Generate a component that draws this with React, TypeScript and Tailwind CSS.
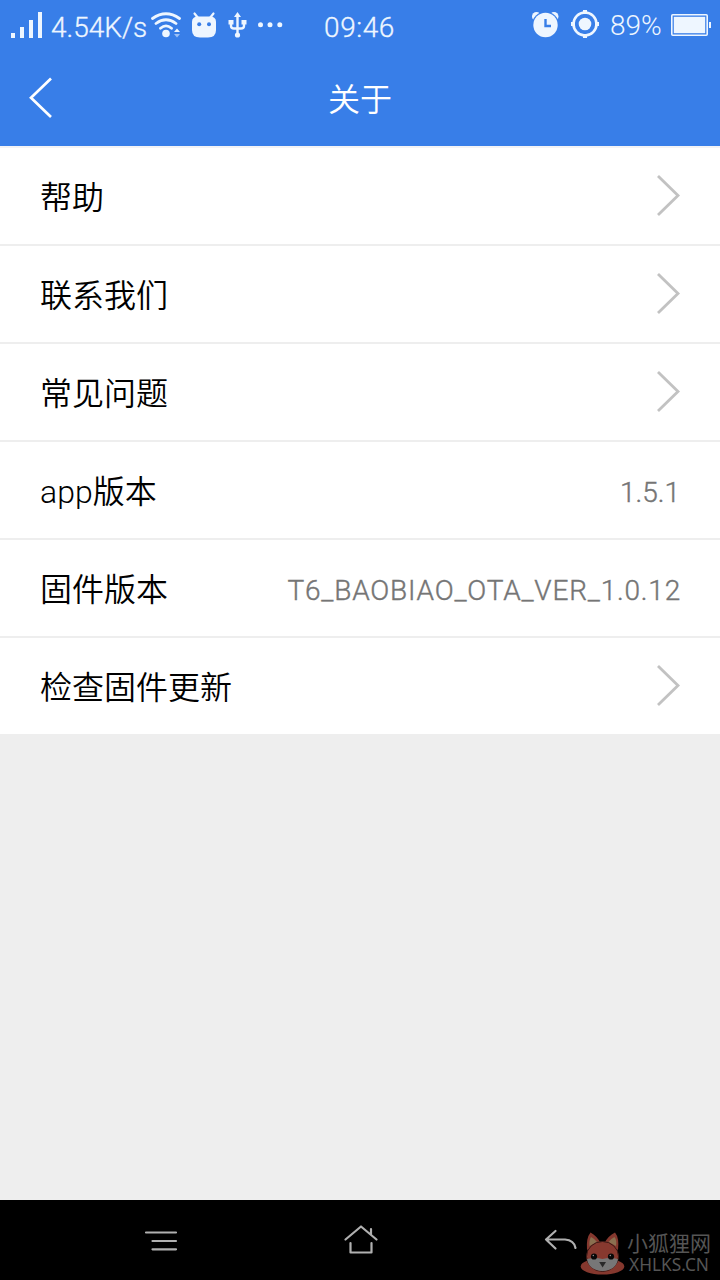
import type { ReactNode } from "react";

const Chevron = () => (
  <svg className="block h-[44px] w-[26px] shrink-0" viewBox="0 0 26 44" fill="none" stroke="#c2c2c2" strokeWidth="2.8">
    <path d="M2 2 L22 21.500 L2 41" />
  </svg>
);

function Row({ label, value, last = false }: { label: string; value?: ReactNode; last?: boolean }) {
  return (
    <li className={last ? "h-[96px]" : "h-[98px] border-b-2 border-[#eeeeee]"}>
      <div className="flex h-[96px] items-center justify-between pl-10">
        <span className="pt-[4px] text-[32px] font-[350] leading-[48px] text-black">{label}</span>
        {value ?? (
          <span className="mr-[38px] flex">
            <Chevron />
          </span>
        )}
      </div>
    </li>
  );
}

function StatusBar() {
  return (
    <div className="flex h-[50px] items-center whitespace-nowrap text-[28px] font-light leading-[50px] text-[#eef6ff]">
      <svg className="ml-[10px] h-[50px] w-[34px] shrink-0" viewBox="10 0 34 50" fill="currentColor">
        <path d="M11 33h4v5h-4zM20 27h4v11h-4zM29 20h4v18h-4zM38 12h4v26h-4z" />
      </svg>
      <span className="ml-[7px] w-[100px] shrink-0 pt-[5px] [-webkit-text-stroke:0.3px_currentColor]">4.54K/s</span>
      <svg className="h-[50px] w-[32px] shrink-0" viewBox="151 0 32 50" fill="none" stroke="currentColor" strokeWidth="2.800" strokeLinecap="round">
        <path d="M152.500 18.500Q166 9 179.500 18.500M156 23.500Q166 16 176 23.500M160.500 28.300Q166 23.500 171.500 28.300" />
        <circle cx="166" cy="33.500" r="3.800" fill="currentColor" stroke="none" />
        <path d="M174 32l3-3.500 3 3.500z" fill="currentColor" stroke="none" />
        <path d="M174 34l3 3.500 3-3.500z" fill="#9cc0f5" stroke="none" />
      </svg>
      <svg className="ml-[8px] h-[50px] w-[26px] shrink-0" viewBox="191 0 26 50">
        <path d="M194.500 13.500l4 5M213.500 13.500l-4 5" stroke="currentColor" strokeWidth="2.200" strokeLinecap="round" />
        <path d="M192 22Q192 16.500 198 16.500H210Q216 16.500 216 22V30Q216 37.500 208 37.500H200Q192 37.500 192 30Z" fill="currentColor" />
        <circle cx="199.200" cy="24.200" r="2" fill="#387ee8" />
        <circle cx="209" cy="24.200" r="2" fill="#387ee8" />
      </svg>
      <svg className="ml-[11px] h-[50px] w-[20px] shrink-0" viewBox="228 0 20 50" fill="currentColor">
        <path d="M237.500 12l3.500 5h-7zM228.500 20h5v4.500h-5zM241.500 20h5v4.500h-5z" />
        <path d="M237.500 15V35M231 23V26Q231 28.500 234 28.500H241Q244 28.500 244 26V23" fill="none" stroke="currentColor" strokeWidth="2.400" />
        <circle cx="237.500" cy="35" r="2.600" />
      </svg>
      <svg className="ml-[9px] h-[50px] w-[28px] shrink-0" viewBox="257 0 28 50" fill="currentColor">
        <circle cx="260.500" cy="24.700" r="2.500" />
        <circle cx="270" cy="24.700" r="2.500" />
        <circle cx="279.800" cy="24.700" r="2.500" />
      </svg>
      <span className="ml-[39px] w-[207px] shrink-0 pt-[5px] tracking-[0.6px] [-webkit-text-stroke:0.3px_currentColor]">09:46</span>
      <svg className="h-[50px] w-[29px] shrink-0" viewBox="531 0 29 50">
        <circle cx="536.500" cy="16.500" r="4.500" fill="currentColor" />
        <circle cx="554" cy="16.500" r="4.500" fill="currentColor" />
        <circle cx="545.500" cy="25" r="13.500" fill="#387ee8" />
        <circle cx="545.500" cy="25" r="12.200" fill="currentColor" />
        <path d="M545.500 19V26H551" fill="none" stroke="#387ee8" strokeWidth="2.400" />
      </svg>
      <svg className="ml-[11px] h-[50px] w-[28px] shrink-0" viewBox="571 0 28 50">
        <circle cx="585" cy="24" r="11.500" fill="none" stroke="currentColor" strokeWidth="2.600" />
        <circle cx="585" cy="24" r="6.300" fill="currentColor" />
        <path d="M585 10v4M585 34v4M571 24h4M595 24h4" stroke="currentColor" strokeWidth="4" />
      </svg>
      <span className="ml-[11px] w-[61px] shrink-0 pt-px">89%</span>
      <svg className="h-[50px] w-[40px] shrink-0" viewBox="671 0 40 50">
        <rect x="671.800" y="14.700" width="35.400" height="20.600" rx="1" fill="none" stroke="currentColor" strokeWidth="1.600" />
        <rect x="673.800" y="16.800" width="31.400" height="16.400" fill="currentColor" />
        <rect x="709" y="22" width="2" height="6" fill="currentColor" />
      </svg>
    </div>
  );
}

function Watermark() {
  return (
    <div className="absolute bottom-0 right-0 flex h-[52px] w-[140px] whitespace-nowrap text-[#555555]">
      <svg className="h-[52px] w-[46px] shrink-0" viewBox="580 1228 46 52">
        <ellipse cx="602.500" cy="1266.500" rx="21.800" ry="8" fill="#85382e" />
        <path d="M587 1250Q586 1238 590.500 1232.500Q597 1236 600.500 1243ZM618 1250Q619.500 1238 615 1232.500Q608 1236 604.500 1243Z" fill="#85382e" />
        <path d="M589.500 1246Q589 1240 591 1237Q595 1239 597 1242ZM616 1246Q617 1240 614.500 1237Q610.500 1239 608.500 1242Z" fill="#8a7050" />
        <ellipse cx="602.500" cy="1256.500" rx="16" ry="15" fill="#87392f" stroke="#3b1915" strokeWidth="1" />
        <path d="M587 1259Q595 1257 602.500 1259Q610 1257 618 1259Q616 1270.500 602.500 1271Q589 1270.500 587 1259Z" fill="#777" />
        <circle cx="594" cy="1256.500" r="3.100" fill="#080808" />
        <circle cx="611" cy="1256.500" r="3.100" fill="#080808" />
        <circle cx="593.300" cy="1255.500" r="0.700" fill="#999" />
        <circle cx="610.300" cy="1255.500" r="0.700" fill="#999" />
        <path d="M599.200 1262h6.800l-3.400 5.500z" fill="#292929" />
      </svg>
      <div className="ml-[1px] pt-[5px]">
        <div className="text-[21px] leading-[22px]">小狐狸网</div>
        <div className="ml-[2px] font-['Noto_Sans'] text-[17.3px] leading-[20px]">XHLKS.CN</div>
      </div>
    </div>
  );
}

function NavBar() {
  return (
    <nav className="relative flex h-[80px] items-center bg-black">
      <svg className="ml-[144px] h-[80px] w-[35px]" viewBox="144 1200 35 80" fill="none" stroke="#b0b0b0" strokeWidth="2.200" strokeLinecap="round">
        <path d="M146 1232.500H176M152.500 1241H176M152.500 1249.300H176" />
      </svg>
      <svg className="ml-[165px] h-[80px] w-[35px]" viewBox="344 1200 35 80" fill="none" stroke="#b0b0b0" strokeWidth="2.200" strokeLinecap="round" strokeLinejoin="round">
        <path d="M345.500 1239.500L361 1226.500L376.500 1239.500M371 1234V1229M350.500 1243V1252.500H371.500V1243" />
      </svg>
      <svg className="ml-[165px] h-[80px] w-[35px]" viewBox="544 1200 35 80" fill="none" stroke="#b0b0b0" strokeWidth="2.200" strokeLinecap="round" strokeLinejoin="round">
        <path d="M555.500 1231L546 1239.500L555.500 1248.500M546 1239.500H565Q574 1240 575.500 1248" />
      </svg>
      <Watermark />
    </nav>
  );
}

export default function App() {
  return (
    <div className="flex h-[1280px] w-[720px] flex-col overflow-hidden bg-[#eeeeee] font-[Roboto,'Noto_Sans_CJK_SC',sans-serif]">
      <header className="h-[146px] shrink-0 bg-[#387ee8] text-white">
        <StatusBar />
        <div className="grid h-[96px] grid-cols-[120px_1fr_120px] items-center">
          <svg className="ml-[28px] h-[44px] w-[26px]" viewBox="28 76 26 44" fill="none" stroke="currentColor" strokeWidth="2.700">
            <path d="M51 78.500L31 97.700L51 117" />
          </svg>
          <h1 className="pt-[4px] text-center text-[32px] font-[350] leading-[48px]">关于</h1>
        </div>
      </header>
      <main className="flex-1">
        <ul className="border-t-2 border-[#f2f3f6] bg-white">
          <Row label="帮助" />
          <Row label="联系我们" />
          <Row label="常见问题" />
          <Row label="app版本" value={<span className="mr-10 pt-[5px] text-[28px] font-light text-[#757575] [-webkit-text-stroke:0.4px_currentColor]">1.5.1</span>} />
          <Row
            label="固件版本"
            value={<span className="mr-[39px] pt-[5px] text-[28px] font-light tracking-[0.8px] text-[#757575] [-webkit-text-stroke:0.4px_currentColor]">T6_BAOBIAO_OTA_VER_1.0.12</span>}
          />
          <Row label="检查固件更新" last />
        </ul>
      </main>
      <NavBar />
    </div>
  );
}
